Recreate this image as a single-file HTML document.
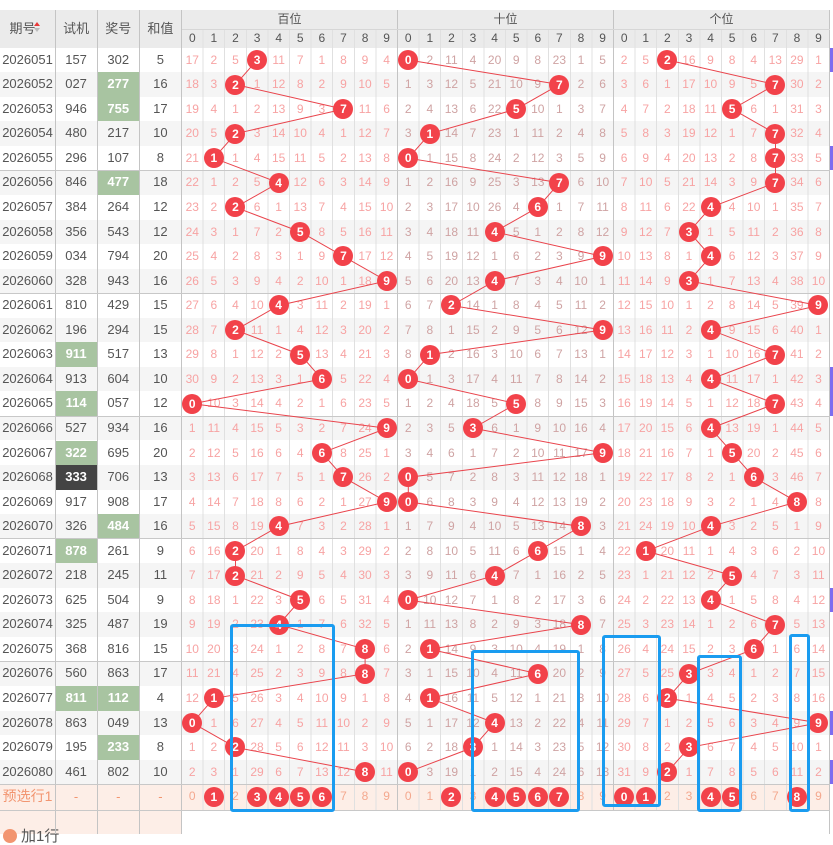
<!DOCTYPE html>
<html><head><meta charset="utf-8"><style>
*{margin:0;padding:0;box-sizing:border-box}
body{width:833px;height:834px;background:#fff;font-family:"Liberation Sans","Noto Sans CJK SC",sans-serif;position:relative;overflow:hidden}
.r{position:absolute;left:0;width:829.5px;height:24.55px;display:flex;background:#fff}
.r.g{background:#f5f5f5}
.r i,.r b{font-style:normal;font-weight:normal;display:block;height:100%;line-height:24.55px;text-align:center;position:relative}
.r i{width:42.17px;font-size:13px;color:#555}
.r i:first-child{width:55px}
.r b{width:21.6px;font-size:12px;color:#f7a3a3}
.r b:nth-child(n+15):nth-child(-n+24){color:#cfa3a3}
.r i.gr{background:#a8c4a1;color:#fff;font-weight:bold}
.r i.dk{background:#444;color:#fff;font-weight:bold}
.r em{position:absolute;left:50%;top:50%;width:20px;height:20px;margin:-10px 0 0 -10px;border-radius:50%;background:#f2424a;color:#fff;font-style:normal;font-weight:bold;font-size:12px;line-height:20px;z-index:3}
.r.p{background:#fdeee7;height:25.8px}
.r.p i{color:#f29570;line-height:25.8px}
.r.p i:first-child{font-size:14px}
.r.p b,.r.p b:nth-child(n+15):nth-child(-n+24){color:#f4a88e;line-height:25.8px}
.hd{position:absolute;background:#ebebeb;color:#555;font-size:13px;text-align:center}
.vl{position:absolute;width:1px;background:#d6d6d6;z-index:2}
.vs{position:absolute;width:1px;background:#c4c4c4;z-index:2}
.hl{position:absolute;left:0;width:829.5px;height:1px;background:#c8c8c8;z-index:2}
.bx{position:absolute;border:3px solid #1a9cf0;border-radius:3px;z-index:4}
.pu{position:absolute;left:829.5px;width:4px;height:24.55px;background:#7c6cf0}
</style></head><body>
<!-- header -->
<div class="hd" style="left:0;top:10px;width:829.5px;height:37.7px"></div>
<div class="hd" style="left:0;top:10px;width:55px;height:37.7px;line-height:37.7px;padding-right:10px">期号</div>
<div style="position:absolute;left:34px;top:22px;width:0;height:0;border-left:3px solid transparent;border-right:3px solid transparent;border-bottom:4px solid #e83a3a;z-index:3"></div>
<div style="position:absolute;left:34px;top:28px;width:0;height:0;border-left:3px solid transparent;border-right:3px solid transparent;border-top:4px solid #bbb;z-index:3"></div>
<div class="hd" style="left:55px;top:10px;width:42.17px;height:37.7px;line-height:37.7px">试机</div>
<div class="hd" style="left:97.17px;top:10px;width:42.17px;height:37.7px;line-height:37.7px">奖号</div>
<div class="hd" style="left:139.34px;top:10px;width:42.17px;height:37.7px;line-height:37.7px">和值</div>
<div class="hd" style="left:181.5px;top:10px;width:216px;height:19.3px;line-height:19.3px;font-size:12px">百位</div>
<div class="hd" style="left:397.5px;top:10px;width:216px;height:19.3px;line-height:19.3px;font-size:12px">十位</div>
<div class="hd" style="left:613.5px;top:10px;width:216px;height:19.3px;line-height:19.3px;font-size:12px">个位</div>
<div class="hd" style="left:181.5px;top:29.3px;width:648px;height:18.4px;line-height:18.4px;font-size:12px;display:flex">
<span style="width:21.6px">0</span><span style="width:21.6px">1</span><span style="width:21.6px">2</span><span style="width:21.6px">3</span><span style="width:21.6px">4</span><span style="width:21.6px">5</span><span style="width:21.6px">6</span><span style="width:21.6px">7</span><span style="width:21.6px">8</span><span style="width:21.6px">9</span>
<span style="width:21.6px">0</span><span style="width:21.6px">1</span><span style="width:21.6px">2</span><span style="width:21.6px">3</span><span style="width:21.6px">4</span><span style="width:21.6px">5</span><span style="width:21.6px">6</span><span style="width:21.6px">7</span><span style="width:21.6px">8</span><span style="width:21.6px">9</span>
<span style="width:21.6px">0</span><span style="width:21.6px">1</span><span style="width:21.6px">2</span><span style="width:21.6px">3</span><span style="width:21.6px">4</span><span style="width:21.6px">5</span><span style="width:21.6px">6</span><span style="width:21.6px">7</span><span style="width:21.6px">8</span><span style="width:21.6px">9</span>
</div>

<!-- rows -->
<div class="r" style="top:47.7px"><i>2026051</i><i>157</i><i>302</i><i>5</i><b>17</b><b>2</b><b>5</b><b><em>3</em></b><b>11</b><b>7</b><b>1</b><b>8</b><b>9</b><b>4</b><b><em>0</em></b><b>2</b><b>11</b><b>4</b><b>20</b><b>9</b><b>8</b><b>23</b><b>1</b><b>5</b><b>2</b><b>5</b><b><em>2</em></b><b>16</b><b>9</b><b>8</b><b>4</b><b>13</b><b>29</b><b>1</b></div>
<div class="r g" style="top:72.25px"><i>2026052</i><i>027</i><i class="gr">277</i><i>16</i><b>18</b><b>3</b><b><em>2</em></b><b>1</b><b>12</b><b>8</b><b>2</b><b>9</b><b>10</b><b>5</b><b>1</b><b>3</b><b>12</b><b>5</b><b>21</b><b>10</b><b>9</b><b><em>7</em></b><b>2</b><b>6</b><b>3</b><b>6</b><b>1</b><b>17</b><b>10</b><b>9</b><b>5</b><b><em>7</em></b><b>30</b><b>2</b></div>
<div class="r" style="top:96.8px"><i>2026053</i><i>946</i><i class="gr">755</i><i>17</i><b>19</b><b>4</b><b>1</b><b>2</b><b>13</b><b>9</b><b>3</b><b><em>7</em></b><b>11</b><b>6</b><b>2</b><b>4</b><b>13</b><b>6</b><b>22</b><b><em>5</em></b><b>10</b><b>1</b><b>3</b><b>7</b><b>4</b><b>7</b><b>2</b><b>18</b><b>11</b><b><em>5</em></b><b>6</b><b>1</b><b>31</b><b>3</b></div>
<div class="r g" style="top:121.35px"><i>2026054</i><i>480</i><i>217</i><i>10</i><b>20</b><b>5</b><b><em>2</em></b><b>3</b><b>14</b><b>10</b><b>4</b><b>1</b><b>12</b><b>7</b><b>3</b><b><em>1</em></b><b>14</b><b>7</b><b>23</b><b>1</b><b>11</b><b>2</b><b>4</b><b>8</b><b>5</b><b>8</b><b>3</b><b>19</b><b>12</b><b>1</b><b>7</b><b><em>7</em></b><b>32</b><b>4</b></div>
<div class="r" style="top:145.9px"><i>2026055</i><i>296</i><i>107</i><i>8</i><b>21</b><b><em>1</em></b><b>1</b><b>4</b><b>15</b><b>11</b><b>5</b><b>2</b><b>13</b><b>8</b><b><em>0</em></b><b>1</b><b>15</b><b>8</b><b>24</b><b>2</b><b>12</b><b>3</b><b>5</b><b>9</b><b>6</b><b>9</b><b>4</b><b>20</b><b>13</b><b>2</b><b>8</b><b><em>7</em></b><b>33</b><b>5</b></div>
<div class="r g" style="top:170.45px"><i>2026056</i><i>846</i><i class="gr">477</i><i>18</i><b>22</b><b>1</b><b>2</b><b>5</b><b><em>4</em></b><b>12</b><b>6</b><b>3</b><b>14</b><b>9</b><b>1</b><b>2</b><b>16</b><b>9</b><b>25</b><b>3</b><b>13</b><b><em>7</em></b><b>6</b><b>10</b><b>7</b><b>10</b><b>5</b><b>21</b><b>14</b><b>3</b><b>9</b><b><em>7</em></b><b>34</b><b>6</b></div>
<div class="r" style="top:195px"><i>2026057</i><i>384</i><i>264</i><i>12</i><b>23</b><b>2</b><b><em>2</em></b><b>6</b><b>1</b><b>13</b><b>7</b><b>4</b><b>15</b><b>10</b><b>2</b><b>3</b><b>17</b><b>10</b><b>26</b><b>4</b><b><em>6</em></b><b>1</b><b>7</b><b>11</b><b>8</b><b>11</b><b>6</b><b>22</b><b><em>4</em></b><b>4</b><b>10</b><b>1</b><b>35</b><b>7</b></div>
<div class="r g" style="top:219.55px"><i>2026058</i><i>356</i><i>543</i><i>12</i><b>24</b><b>3</b><b>1</b><b>7</b><b>2</b><b><em>5</em></b><b>8</b><b>5</b><b>16</b><b>11</b><b>3</b><b>4</b><b>18</b><b>11</b><b><em>4</em></b><b>5</b><b>1</b><b>2</b><b>8</b><b>12</b><b>9</b><b>12</b><b>7</b><b><em>3</em></b><b>1</b><b>5</b><b>11</b><b>2</b><b>36</b><b>8</b></div>
<div class="r" style="top:244.1px"><i>2026059</i><i>034</i><i>794</i><i>20</i><b>25</b><b>4</b><b>2</b><b>8</b><b>3</b><b>1</b><b>9</b><b><em>7</em></b><b>17</b><b>12</b><b>4</b><b>5</b><b>19</b><b>12</b><b>1</b><b>6</b><b>2</b><b>3</b><b>9</b><b><em>9</em></b><b>10</b><b>13</b><b>8</b><b>1</b><b><em>4</em></b><b>6</b><b>12</b><b>3</b><b>37</b><b>9</b></div>
<div class="r g" style="top:268.65px"><i>2026060</i><i>328</i><i>943</i><i>16</i><b>26</b><b>5</b><b>3</b><b>9</b><b>4</b><b>2</b><b>10</b><b>1</b><b>18</b><b><em>9</em></b><b>5</b><b>6</b><b>20</b><b>13</b><b><em>4</em></b><b>7</b><b>3</b><b>4</b><b>10</b><b>1</b><b>11</b><b>14</b><b>9</b><b><em>3</em></b><b>1</b><b>7</b><b>13</b><b>4</b><b>38</b><b>10</b></div>
<div class="r" style="top:293.2px"><i>2026061</i><i>810</i><i>429</i><i>15</i><b>27</b><b>6</b><b>4</b><b>10</b><b><em>4</em></b><b>3</b><b>11</b><b>2</b><b>19</b><b>1</b><b>6</b><b>7</b><b><em>2</em></b><b>14</b><b>1</b><b>8</b><b>4</b><b>5</b><b>11</b><b>2</b><b>12</b><b>15</b><b>10</b><b>1</b><b>2</b><b>8</b><b>14</b><b>5</b><b>39</b><b><em>9</em></b></div>
<div class="r g" style="top:317.75px"><i>2026062</i><i>196</i><i>294</i><i>15</i><b>28</b><b>7</b><b><em>2</em></b><b>11</b><b>1</b><b>4</b><b>12</b><b>3</b><b>20</b><b>2</b><b>7</b><b>8</b><b>1</b><b>15</b><b>2</b><b>9</b><b>5</b><b>6</b><b>12</b><b><em>9</em></b><b>13</b><b>16</b><b>11</b><b>2</b><b><em>4</em></b><b>9</b><b>15</b><b>6</b><b>40</b><b>1</b></div>
<div class="r" style="top:342.3px"><i>2026063</i><i class="gr">911</i><i>517</i><i>13</i><b>29</b><b>8</b><b>1</b><b>12</b><b>2</b><b><em>5</em></b><b>13</b><b>4</b><b>21</b><b>3</b><b>8</b><b><em>1</em></b><b>2</b><b>16</b><b>3</b><b>10</b><b>6</b><b>7</b><b>13</b><b>1</b><b>14</b><b>17</b><b>12</b><b>3</b><b>1</b><b>10</b><b>16</b><b><em>7</em></b><b>41</b><b>2</b></div>
<div class="r g" style="top:366.85px"><i>2026064</i><i>913</i><i>604</i><i>10</i><b>30</b><b>9</b><b>2</b><b>13</b><b>3</b><b>1</b><b><em>6</em></b><b>5</b><b>22</b><b>4</b><b><em>0</em></b><b>1</b><b>3</b><b>17</b><b>4</b><b>11</b><b>7</b><b>8</b><b>14</b><b>2</b><b>15</b><b>18</b><b>13</b><b>4</b><b><em>4</em></b><b>11</b><b>17</b><b>1</b><b>42</b><b>3</b></div>
<div class="r" style="top:391.4px"><i>2026065</i><i class="gr">114</i><i>057</i><i>12</i><b><em>0</em></b><b>10</b><b>3</b><b>14</b><b>4</b><b>2</b><b>1</b><b>6</b><b>23</b><b>5</b><b>1</b><b>2</b><b>4</b><b>18</b><b>5</b><b><em>5</em></b><b>8</b><b>9</b><b>15</b><b>3</b><b>16</b><b>19</b><b>14</b><b>5</b><b>1</b><b>12</b><b>18</b><b><em>7</em></b><b>43</b><b>4</b></div>
<div class="r g" style="top:415.95px"><i>2026066</i><i>527</i><i>934</i><i>16</i><b>1</b><b>11</b><b>4</b><b>15</b><b>5</b><b>3</b><b>2</b><b>7</b><b>24</b><b><em>9</em></b><b>2</b><b>3</b><b>5</b><b><em>3</em></b><b>6</b><b>1</b><b>9</b><b>10</b><b>16</b><b>4</b><b>17</b><b>20</b><b>15</b><b>6</b><b><em>4</em></b><b>13</b><b>19</b><b>1</b><b>44</b><b>5</b></div>
<div class="r" style="top:440.5px"><i>2026067</i><i class="gr">322</i><i>695</i><i>20</i><b>2</b><b>12</b><b>5</b><b>16</b><b>6</b><b>4</b><b><em>6</em></b><b>8</b><b>25</b><b>1</b><b>3</b><b>4</b><b>6</b><b>1</b><b>7</b><b>2</b><b>10</b><b>11</b><b>17</b><b><em>9</em></b><b>18</b><b>21</b><b>16</b><b>7</b><b>1</b><b><em>5</em></b><b>20</b><b>2</b><b>45</b><b>6</b></div>
<div class="r g" style="top:465.05px"><i>2026068</i><i class="dk">333</i><i>706</i><i>13</i><b>3</b><b>13</b><b>6</b><b>17</b><b>7</b><b>5</b><b>1</b><b><em>7</em></b><b>26</b><b>2</b><b><em>0</em></b><b>5</b><b>7</b><b>2</b><b>8</b><b>3</b><b>11</b><b>12</b><b>18</b><b>1</b><b>19</b><b>22</b><b>17</b><b>8</b><b>2</b><b>1</b><b><em>6</em></b><b>3</b><b>46</b><b>7</b></div>
<div class="r" style="top:489.6px"><i>2026069</i><i>917</i><i>908</i><i>17</i><b>4</b><b>14</b><b>7</b><b>18</b><b>8</b><b>6</b><b>2</b><b>1</b><b>27</b><b><em>9</em></b><b><em>0</em></b><b>6</b><b>8</b><b>3</b><b>9</b><b>4</b><b>12</b><b>13</b><b>19</b><b>2</b><b>20</b><b>23</b><b>18</b><b>9</b><b>3</b><b>2</b><b>1</b><b>4</b><b><em>8</em></b><b>8</b></div>
<div class="r g" style="top:514.15px"><i>2026070</i><i>326</i><i class="gr">484</i><i>16</i><b>5</b><b>15</b><b>8</b><b>19</b><b><em>4</em></b><b>7</b><b>3</b><b>2</b><b>28</b><b>1</b><b>1</b><b>7</b><b>9</b><b>4</b><b>10</b><b>5</b><b>13</b><b>14</b><b><em>8</em></b><b>3</b><b>21</b><b>24</b><b>19</b><b>10</b><b><em>4</em></b><b>3</b><b>2</b><b>5</b><b>1</b><b>9</b></div>
<div class="r" style="top:538.7px"><i>2026071</i><i class="gr">878</i><i>261</i><i>9</i><b>6</b><b>16</b><b><em>2</em></b><b>20</b><b>1</b><b>8</b><b>4</b><b>3</b><b>29</b><b>2</b><b>2</b><b>8</b><b>10</b><b>5</b><b>11</b><b>6</b><b><em>6</em></b><b>15</b><b>1</b><b>4</b><b>22</b><b><em>1</em></b><b>20</b><b>11</b><b>1</b><b>4</b><b>3</b><b>6</b><b>2</b><b>10</b></div>
<div class="r g" style="top:563.25px"><i>2026072</i><i>218</i><i>245</i><i>11</i><b>7</b><b>17</b><b><em>2</em></b><b>21</b><b>2</b><b>9</b><b>5</b><b>4</b><b>30</b><b>3</b><b>3</b><b>9</b><b>11</b><b>6</b><b><em>4</em></b><b>7</b><b>1</b><b>16</b><b>2</b><b>5</b><b>23</b><b>1</b><b>21</b><b>12</b><b>2</b><b><em>5</em></b><b>4</b><b>7</b><b>3</b><b>11</b></div>
<div class="r" style="top:587.8px"><i>2026073</i><i>625</i><i>504</i><i>9</i><b>8</b><b>18</b><b>1</b><b>22</b><b>3</b><b><em>5</em></b><b>6</b><b>5</b><b>31</b><b>4</b><b><em>0</em></b><b>10</b><b>12</b><b>7</b><b>1</b><b>8</b><b>2</b><b>17</b><b>3</b><b>6</b><b>24</b><b>2</b><b>22</b><b>13</b><b><em>4</em></b><b>1</b><b>5</b><b>8</b><b>4</b><b>12</b></div>
<div class="r g" style="top:612.35px"><i>2026074</i><i>325</i><i>487</i><i>19</i><b>9</b><b>19</b><b>2</b><b>23</b><b><em>4</em></b><b>1</b><b>7</b><b>6</b><b>32</b><b>5</b><b>1</b><b>11</b><b>13</b><b>8</b><b>2</b><b>9</b><b>3</b><b>18</b><b><em>8</em></b><b>7</b><b>25</b><b>3</b><b>23</b><b>14</b><b>1</b><b>2</b><b>6</b><b><em>7</em></b><b>5</b><b>13</b></div>
<div class="r" style="top:636.9px"><i>2026075</i><i>368</i><i>816</i><i>15</i><b>10</b><b>20</b><b>3</b><b>24</b><b>1</b><b>2</b><b>8</b><b>7</b><b><em>8</em></b><b>6</b><b>2</b><b><em>1</em></b><b>14</b><b>9</b><b>3</b><b>10</b><b>4</b><b>19</b><b>1</b><b>8</b><b>26</b><b>4</b><b>24</b><b>15</b><b>2</b><b>3</b><b><em>6</em></b><b>1</b><b>6</b><b>14</b></div>
<div class="r g" style="top:661.45px"><i>2026076</i><i>560</i><i>863</i><i>17</i><b>11</b><b>21</b><b>4</b><b>25</b><b>2</b><b>3</b><b>9</b><b>8</b><b><em>8</em></b><b>7</b><b>3</b><b>1</b><b>15</b><b>10</b><b>4</b><b>11</b><b><em>6</em></b><b>20</b><b>2</b><b>9</b><b>27</b><b>5</b><b>25</b><b><em>3</em></b><b>3</b><b>4</b><b>1</b><b>2</b><b>7</b><b>15</b></div>
<div class="r" style="top:686px"><i>2026077</i><i class="gr">811</i><i class="gr">112</i><i>4</i><b>12</b><b><em>1</em></b><b>5</b><b>26</b><b>3</b><b>4</b><b>10</b><b>9</b><b>1</b><b>8</b><b>4</b><b><em>1</em></b><b>16</b><b>11</b><b>5</b><b>12</b><b>1</b><b>21</b><b>3</b><b>10</b><b>28</b><b>6</b><b><em>2</em></b><b>1</b><b>4</b><b>5</b><b>2</b><b>3</b><b>8</b><b>16</b></div>
<div class="r g" style="top:710.55px"><i>2026078</i><i>863</i><i>049</i><i>13</i><b><em>0</em></b><b>1</b><b>6</b><b>27</b><b>4</b><b>5</b><b>11</b><b>10</b><b>2</b><b>9</b><b>5</b><b>1</b><b>17</b><b>12</b><b><em>4</em></b><b>13</b><b>2</b><b>22</b><b>4</b><b>11</b><b>29</b><b>7</b><b>1</b><b>2</b><b>5</b><b>6</b><b>3</b><b>4</b><b>9</b><b><em>9</em></b></div>
<div class="r" style="top:735.1px"><i>2026079</i><i>195</i><i class="gr">233</i><i>8</i><b>1</b><b>2</b><b><em>2</em></b><b>28</b><b>5</b><b>6</b><b>12</b><b>11</b><b>3</b><b>10</b><b>6</b><b>2</b><b>18</b><b><em>3</em></b><b>1</b><b>14</b><b>3</b><b>23</b><b>5</b><b>12</b><b>30</b><b>8</b><b>2</b><b><em>3</em></b><b>6</b><b>7</b><b>4</b><b>5</b><b>10</b><b>1</b></div>
<div class="r g" style="top:759.65px"><i>2026080</i><i>461</i><i>802</i><i>10</i><b>2</b><b>3</b><b>1</b><b>29</b><b>6</b><b>7</b><b>13</b><b>12</b><b><em>8</em></b><b>11</b><b><em>0</em></b><b>3</b><b>19</b><b>1</b><b>2</b><b>15</b><b>4</b><b>24</b><b>6</b><b>13</b><b>31</b><b>9</b><b><em>2</em></b><b>1</b><b>7</b><b>8</b><b>5</b><b>6</b><b>11</b><b>2</b></div>
<div class="r p" style="top:784.2px"><i>预选行1</i><i>-</i><i>-</i><i>-</i><b>0</b><b><em>1</em></b><b>2</b><b><em>3</em></b><b><em>4</em></b><b><em>5</em></b><b><em>6</em></b><b>7</b><b>8</b><b>9</b><b>0</b><b>1</b><b><em>2</em></b><b>3</b><b><em>4</em></b><b><em>5</em></b><b><em>6</em></b><b><em>7</em></b><b>8</b><b>9</b><b><em>0</em></b><b><em>1</em></b><b>2</b><b>3</b><b><em>4</em></b><b><em>5</em></b><b>6</b><b>7</b><b><em>8</em></b><b>9</b></div>

<!-- add row area -->
<div style="position:absolute;left:0;top:810px;width:181.5px;height:24px;background:#fdeee7"></div>
<div style="position:absolute;left:3px;top:829px;width:14px;height:14px;border-radius:50%;background:#f29570"></div>
<div style="position:absolute;left:21px;top:828px;font-size:15px;color:#555;line-height:17px">加1行</div>

<!-- purple markers -->
<div class="pu" style="top:47.7px"></div>
<div class="pu" style="top:145.9px"></div>
<div class="pu" style="top:366.85px"></div>
<div class="pu" style="top:391.4px"></div>
<div class="pu" style="top:587.8px"></div>
<div class="pu" style="top:710.55px"></div>
<div class="pu" style="top:759.65px"></div>

<!-- grid lines -->
<div style="position:absolute;left:181.5px;top:29.3px;width:648px;height:781px;background:repeating-linear-gradient(to right,transparent 0 20.6px,#e0e0e0 20.6px 21.6px);z-index:1"></div>
<div class="vs" style="left:55px;top:10px;height:824px"></div>
<div class="vs" style="left:97px;top:10px;height:824px"></div>
<div class="vs" style="left:139px;top:10px;height:824px"></div>
<div class="vs" style="left:181px;top:10px;height:824px"></div>
<div class="vs" style="left:397px;top:10px;height:800px"></div>
<div class="vs" style="left:613px;top:10px;height:800px"></div>
<div class="vs" style="left:829px;top:10px;height:824px"></div>
<div class="hl" style="top:29px;left:181.5px;width:648px;background:#d6d6d6"></div>
<div class="hl" style="top:170px"></div>
<div class="hl" style="top:293px"></div>
<div class="hl" style="top:415.5px"></div>
<div class="hl" style="top:538.3px"></div>
<div class="hl" style="top:661px"></div>
<div class="hl" style="top:784px"></div>
<div class="hl" style="top:810px"></div>

<!-- connecting lines -->
<svg width="833" height="834" style="position:absolute;left:0;top:0;z-index:2" fill="none" stroke="#e9444c" stroke-width="1">
<polyline points="257.1,60 235.5,84.55 343.5,109.1 235.5,133.65 213.9,158.2 278.7,182.75 235.5,207.3 300.3,231.85 343.5,256.4 386.7,280.95 278.7,305.5 235.5,330.05 300.3,354.6 321.9,379.15 192.3,403.7 386.7,428.25 321.9,452.8 343.5,477.35 386.7,501.9 278.7,526.45 235.5,551 235.5,575.55 300.3,600.1 278.7,624.65 365.1,649.2 365.1,673.75 213.9,698.3 192.3,722.85 235.5,747.4 365.1,771.95"/>
<polyline points="408.3,60 559.5,84.55 516.3,109.1 429.9,133.65 408.3,158.2 559.5,182.75 537.9,207.3 494.7,231.85 602.7,256.4 494.7,280.95 451.5,305.5 602.7,330.05 429.9,354.6 408.3,379.15 516.3,403.7 473.1,428.25 602.7,452.8 408.3,477.35 408.3,501.9 581.1,526.45 537.9,551 494.7,575.55 408.3,600.1 581.1,624.65 429.9,649.2 537.9,673.75 429.9,698.3 494.7,722.85 473.1,747.4 408.3,771.95"/>
<polyline points="667.5,60 775.5,84.55 732.3,109.1 775.5,133.65 775.5,158.2 775.5,182.75 710.7,207.3 689.1,231.85 710.7,256.4 689.1,280.95 818.7,305.5 710.7,330.05 775.5,354.6 710.7,379.15 775.5,403.7 710.7,428.25 732.3,452.8 753.9,477.35 797.1,501.9 710.7,526.45 645.9,551 732.3,575.55 710.7,600.1 775.5,624.65 753.9,649.2 689.1,673.75 667.5,698.3 818.7,722.85 689.1,747.4 667.5,771.95"/>
</svg>

<!-- blue boxes -->
<div class="bx" style="left:230px;top:624px;width:105px;height:188px"></div>
<div class="bx" style="left:471px;top:650px;width:109px;height:162px"></div>
<div class="bx" style="left:602px;top:635px;width:59px;height:172px"></div>
<div class="bx" style="left:697px;top:655px;width:45px;height:157px"></div>
<div class="bx" style="left:789px;top:634px;width:21px;height:178px"></div>
</body></html>
